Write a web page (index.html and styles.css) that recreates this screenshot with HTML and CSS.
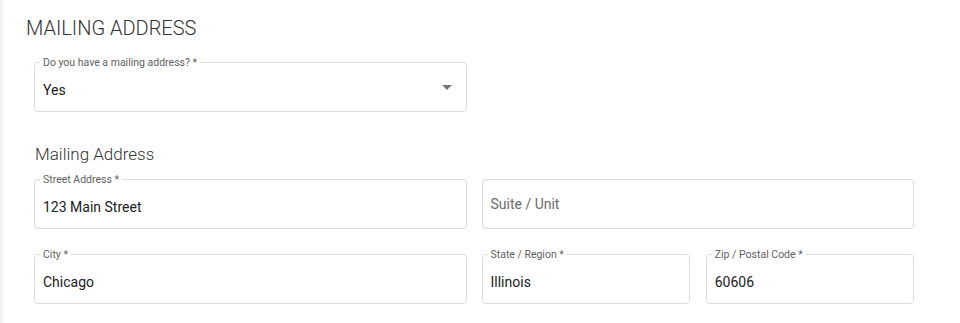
FILE: index.html
```html
<!DOCTYPE html>
<html lang="en">
<head>
<meta charset="utf-8">
<title>Mailing Address</title>
<link rel="stylesheet" href="styles.css">
</head>
<body>
<main class="page">
  <h1 class="title">MAILING ADDRESS</h1>
  <div class="form">
    <div class="grid">
      <div class="field filled select">
        <span class="label">Do you have a mailing address? *</span>
        <span class="value">Yes</span>
        <svg class="arrow" width="10" height="5" viewBox="0 0 10 5"><path d="M0 0h10L5 5z" fill="#757575"/></svg>
      </div>
    </div>
    <h2 class="subtitle">Mailing Address</h2>
    <div class="grid rows">
      <div class="field filled">
        <span class="label">Street Address *</span>
        <span class="value">123 Main Street</span>
      </div>
      <div class="field">
        <span class="placeholder">Suite / Unit</span>
      </div>
      <div class="field filled">
        <span class="label">City *</span>
        <span class="value">Chicago</span>
      </div>
      <div class="grid inner">
        <div class="field filled">
          <span class="label">State / Region *</span>
          <span class="value">Illinois</span>
        </div>
        <div class="field filled">
          <span class="label">Zip / Postal Code *</span>
          <span class="value">60606</span>
        </div>
      </div>
    </div>
  </div>
</main>
</body>
</html>
```
FILE: styles.css
```css
html, body {
  margin: 0;
  background: #ffffff;
}
body {
  border-left: 3px solid #f2f2f6;
  min-height: 100vh;
  box-sizing: border-box;
  font-family: Roboto, "Liberation Sans", sans-serif;
}
.page {
  padding: 16px 46px 0 23px;
}
.title {
  margin: 0;
  font-weight: 300;
  font-size: 20px;
  line-height: 24px;
  color: #333;
}
.form {
  padding-left: 8px;
  margin-top: 22px;
}
.grid {
  display: grid;
  grid-template-columns: 1fr 1fr;
  column-gap: 15px;
}
.inner {
  column-gap: 16px;
}
.rows {
  row-gap: 25px;
}
.subtitle {
  margin: 32px 0 15px 1px;
  font-weight: 300;
  font-size: 17px;
  line-height: 20px;
  color: #333;
}
.field {
  position: relative;
  box-sizing: border-box;
  height: 50px;
  border: 1px solid #dcdcdc;
  border-radius: 4px;
  display: flex;
  align-items: center;
  padding: 0 8px;
}
.label {
  position: absolute;
  top: -7px;
  left: 5px;
  padding: 0 3px;
  background: #fff;
  font-size: 10.5px;
  line-height: 13px;
  color: #616161;
}
.value {
  font-size: 14px;
  color: #212121;
  padding-top: 5px;
}
.placeholder {
  font-size: 14px;
  color: #6b6b6b;
}
.select {
  padding-right: 14px;
}
.arrow {
  margin-left: auto;
  margin-top: 1px;
}
```
